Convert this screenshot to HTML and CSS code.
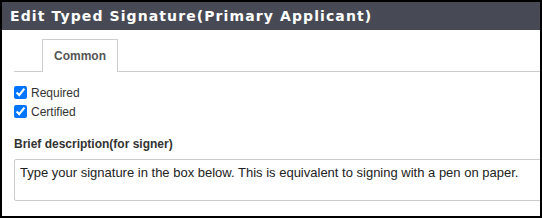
FILE: index.html
```html
<!DOCTYPE html>
<html>
<head>
    <meta charset="UTF-8">
    <title>Edit Typed Signature</title>
    <link rel="stylesheet" href="styles.css">
</head>
<body>
    <div class="dialog">
        <div class="dialog-title">Edit Typed Signature(Primary Applicant)</div>
        <div class="dialog-body">
            <div class="tabs">
                <div class="tab active">Common</div>
            </div>
            <div class="checks">
                <label class="check"><input type="checkbox" checked> Required</label>
                <label class="check"><input type="checkbox" checked> Certified</label>
            </div>
            <div class="field-label">Brief description(for signer)</div>
            <textarea class="desc">Type your signature in the box below. This is equivalent to signing with a pen on paper.</textarea>
        </div>
    </div>
</body>
</html>
```

FILE: styles.css
```css
body {
    margin: 0;
    font-family: "Liberation Sans", Arial, sans-serif;
    background: white;
}
.dialog {
    width: 542px;
    height: 218px;
    box-sizing: border-box;
    border: 2px solid #000;
    overflow: hidden;
    background: white;
}
.dialog-title {
    height: 28px;
    line-height: 28px;
    padding-left: 8px;
    background: #474a54;
    color: #fff;
    font-family: "DejaVu Sans", Verdana, sans-serif;
    font-weight: bold;
    font-size: 14px;
    letter-spacing: 1.1px;
    white-space: nowrap;
}
.dialog-body {
    padding: 9px 0 0 12px;
}
.tabs {
    display: flex;
    padding-left: 28px;
    border-bottom: 1px solid #ccc;
}
.tab {
    width: 76px;
    height: 33px;
    box-sizing: border-box;
    border: 1px solid #ccc;
    border-bottom: none;
    margin-bottom: -1px;
    background: #fff;
    color: #555;
    font-size: 12px;
    font-weight: bold;
    line-height: 32px;
    text-align: center;
}
.checks {
    margin-top: 14px;
    display: flex;
    flex-direction: column;
    gap: 6px;
}
.check {
    display: flex;
    align-items: center;
    font-size: 12px;
    color: #333;
    height: 13px;
}
.check input {
    width: 13px;
    height: 13px;
    margin: 0 4px 0 0;
    accent-color: #0075ff;
}
.field-label {
    margin-top: 19px;
    font-size: 12px;
    font-weight: bold;
    color: #333;
}
.desc {
    display: block;
    margin-top: 8px;
    width: 560px;
    height: 42px;
    box-sizing: border-box;
    border: 1px solid #ccc;
    border-radius: 2px;
    padding: 5px 5px;
    font-family: "Liberation Sans", Arial, sans-serif;
    font-size: 13px;
    color: #222;
    resize: none;
}
```
